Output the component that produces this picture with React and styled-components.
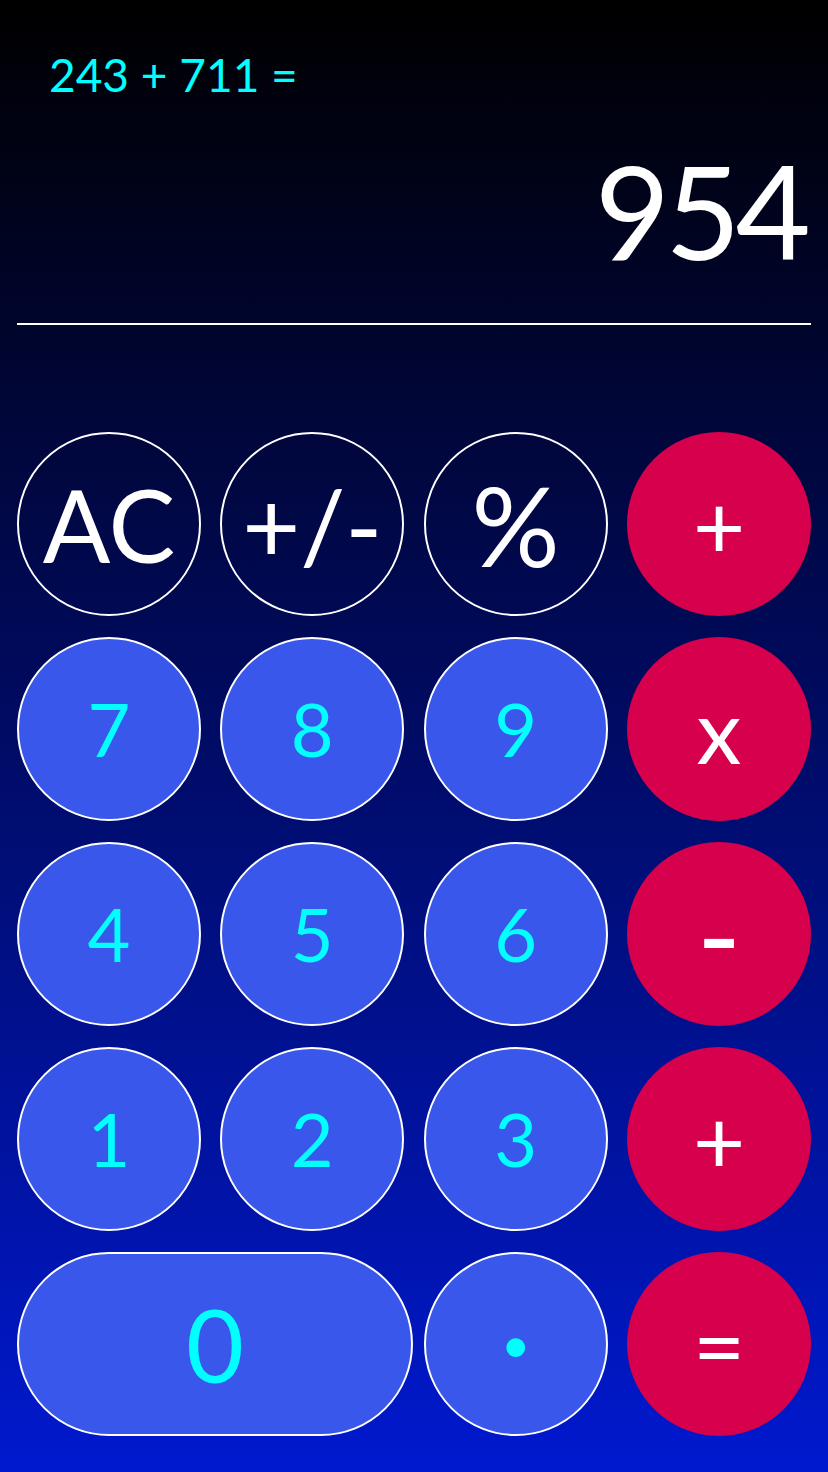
import React from 'react'
import styled, { createGlobalStyle } from 'styled-components'

const GlobalStyle = createGlobalStyle`
  html, body {
    margin: 0;
    padding: 0;
  }
  body {
    font-family: Lato, "Noto Sans", sans-serif;
  }
`

const Screen = styled.div`
  width: 828px;
  height: 1472px;
  box-sizing: border-box;
  padding: 0 17px;
  background: linear-gradient(180deg, #000000 0%, #000a5a 45%, #0019cf 100%);
  display: flex;
  flex-direction: column;
  overflow: hidden;
`

const Expression = styled.div`
  margin-top: 52px;
  padding-left: 32px;
  font-size: 46px;
  line-height: 1;
  color: #00ffff;
`

const Result = styled.div`
  margin-top: 47px;
  text-align: right;
  font-size: 130px;
  line-height: 1;
  letter-spacing: -5px;
  color: #ffffff;
  padding-right: 5px;
`

const Divider = styled.div`
  margin-top: 48px;
  height: 2px;
  background: #ffffff;
`

const Keypad = styled.div`
  margin-top: 107px;
  display: grid;
  grid-template-columns: repeat(4, 184px);
  grid-auto-rows: 184px;
  column-gap: 19.33px;
  row-gap: 21px;
`

const kinds = {
  func: { bg: 'transparent', border: '2px solid #ffffff', color: '#ffffff' },
  digit: { bg: '#3a57eb', border: '2px solid #ffffff', color: '#00ffff' },
  op: { bg: '#d6004c', border: 'none', color: '#ffffff' },
}

const Key = styled.button`
  box-sizing: border-box;
  width: ${p => (p.$wide ? '396px' : '184px')};
  height: 184px;
  grid-column: ${p => (p.$wide ? 'span 2' : 'auto')};
  border-radius: 92px;
  background: ${p => kinds[p.$kind].bg};
  border: ${p => kinds[p.$kind].border};
  color: ${p => kinds[p.$kind].color};
  font-family: Lato, "Noto Sans", sans-serif;
  font-size: ${p => p.$size}px;
  line-height: 1;
  padding: 0;
  display: flex;
  align-items: center;
  justify-content: center;
  cursor: pointer;
`

const keys = [
  { label: 'AC', kind: 'func', size: 100 },
  { label: '+/-', kind: 'func', size: 100 },
  { label: '%', kind: 'func', size: 110 },
  { label: '+', kind: 'op', size: 90 },
  { label: '7', kind: 'digit', size: 74 },
  { label: '8', kind: 'digit', size: 74 },
  { label: '9', kind: 'digit', size: 74 },
  { label: 'x', kind: 'op', size: 90 },
  { label: '4', kind: 'digit', size: 74 },
  { label: '5', kind: 'digit', size: 74 },
  { label: '6', kind: 'digit', size: 74 },
  { label: '-', kind: 'op', size: 120 },
  { label: '1', kind: 'digit', size: 74 },
  { label: '2', kind: 'digit', size: 74 },
  { label: '3', kind: 'digit', size: 74 },
  { label: '+', kind: 'op', size: 90 },
  { label: '0', kind: 'digit', size: 100, wide: true },
  { label: '•', kind: 'digit', size: 50 },
  { label: '=', kind: 'op', size: 90 },
]

export default function App() {
  return (
    <Screen>
      <GlobalStyle />
      <Expression>243 + 711 =</Expression>
      <Result>954</Result>
      <Divider />
      <Keypad>
        {keys.map((k, i) => (
          <Key key={i} $kind={k.kind} $size={k.size} $wide={k.wide}>
            {k.label}
          </Key>
        ))}
      </Keypad>
    </Screen>
  )
}
